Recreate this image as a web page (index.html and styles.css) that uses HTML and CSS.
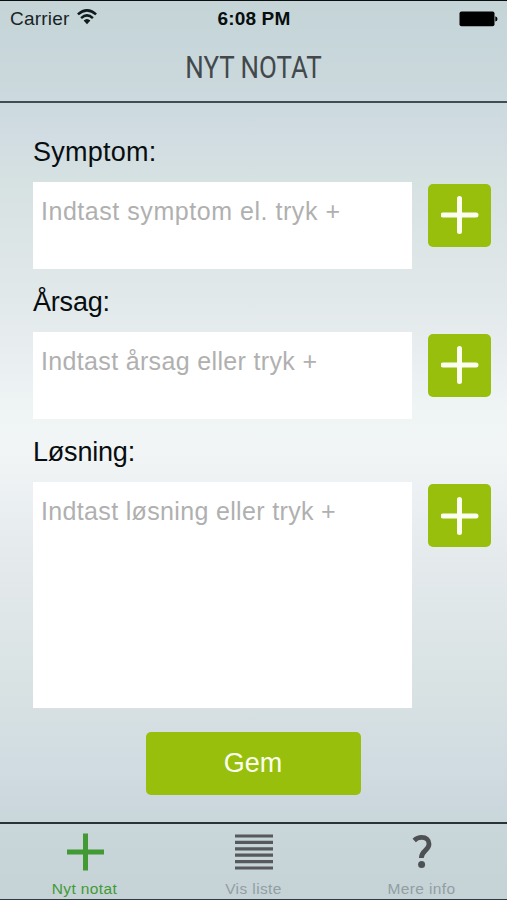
FILE: index.html
```
<!DOCTYPE html>
<html lang="da">
<head>
<meta charset="utf-8">
<title>Nyt notat</title>
<link rel="stylesheet" href="styles.css">
</head>
<body>
<div class="app">
  <header class="header">
    <div class="status">
      <div class="carrier"><span>Carrier</span>
        <svg class="wifi" width="20" height="16" viewBox="0 0 20 16"><g fill="none" stroke="#111a1c" stroke-width="2.5"><path d="M.9 5.4Q10-2.6 19.1 5.4"/><path d="M4.1 9.1Q10 3.7 15.9 9.1"/></g><path d="M6.6 11.6Q10 8.4 13.4 11.6L10 15.2Z" fill="#111a1c"/></svg>
      </div>
      <div class="time">6:08 PM</div>
      <svg class="battery" width="39" height="16" viewBox="0 0 39 16"><rect x=".5" y=".5" width="35" height="14.8" rx="2" fill="#000"/><path d="M36.3 5.2Q38.5 6 38.5 8T36.3 10.6Z" fill="#000"/></svg>
    </div>
    <h1 class="title">NYT NOTAT</h1>
  </header>
  <main class="form">
    <section class="field">
      <label class="label symptom" for="symptom">Symptom:</label>
      <div class="row"><textarea id="symptom" class="input wide" placeholder="Indtast symptom el. tryk +"></textarea>
      <button class="add" aria-label="Tilføj symptom"><svg width="38" height="38" viewBox="0 0 38 38"><path d="M18.5 2.5V35.5M2 19H35"/></svg></button></div>
    </section>
    <section class="field">
      <label class="label cause" for="cause">Årsag:</label>
      <div class="row"><textarea id="cause" class="input" placeholder="Indtast årsag eller tryk +"></textarea>
      <button class="add" aria-label="Tilføj årsag"><svg width="38" height="38" viewBox="0 0 38 38"><path d="M18.5 2.5V35.5M2 19H35"/></svg></button></div>
    </section>
    <section class="field">
      <label class="label solution" for="solution">Løsning:</label>
      <div class="row"><textarea id="solution" class="input tall" placeholder="Indtast løsning eller tryk +"></textarea>
      <button class="add" aria-label="Tilføj løsning"><svg width="38" height="38" viewBox="0 0 38 38"><path d="M18.5 2.5V35.5M2 19H35"/></svg></button></div>
    </section>
    <button class="save">Gem</button>
  </main>
  <nav class="tabs">
    <div class="tab active">
      <svg width="40" height="40" viewBox="0 0 40 40"><path d="M20.5 1.5V38.5M2 20H39" stroke="#429a35" stroke-width="5"/></svg>
      <span>Nyt notat</span>
    </div>
    <div class="tab">
      <svg width="40" height="40" viewBox="0 0 40 40"><path d="M1 4H39M1 10.4H39M1 16.8H39M1 23.2H39M1 29.6H39M1 36H39" stroke="#56595d" stroke-width="3.2"/></svg>
      <span>Vis liste</span>
    </div>
    <div class="tab">
      <svg width="40" height="40" viewBox="0 0 40 40"><path d="M11.2 8.5Q14.4 5.4 18.5 5.4C23.5 5.4 26 8 26 12C26 18.5 18.5 18.3 18.3 26" fill="none" stroke="#4d5154" stroke-width="4.8"/><circle cx="18.6" cy="32.6" r="3.5" fill="#4d5154"/></svg>
      <span>Mere info</span>
    </div>
  </nav>
</div>
</body>
</html>
```
FILE: styles.css
```
* { box-sizing: border-box; }
body { margin: 0; font-family: "Liberation Sans", Arial, sans-serif; }
.app {
  width: 507px;
  height: 900px;
  display: flex;
  flex-direction: column;
  overflow: hidden;
  border-top: 1px solid #090d10;
  border-bottom: 1px solid #303a40;
  background: linear-gradient(#c4d4d7 0, #cddadf 110px, #d0dce2 130px, #d6e1e2 180px, #e1e8ea 290px, #eff4f5 410px, #f1f5f6 450px, #e5eaed 550px, #d8e2e3 690px, #d0dbe2 770px, #c9d6da 820px, #c5d3d7 900px);
}
.header {
  height: 102px;
  flex: none;
  border-bottom: 2px solid #414d54;
}
.status {
  height: 35px;
  display: grid;
  grid-template-columns: 1fr auto 1fr;
  align-items: center;
  padding: 0 9px 0 10px;
  font-size: 19px;
  color: #1a2426;
}
.carrier { display: flex; align-items: center; gap: 8px; letter-spacing: .2px; }
.wifi { margin-top: -3px; }
.time { font-weight: bold; letter-spacing: .15px; color: #080d0e; }
.battery { justify-self: end; }
.title {
  margin: 13px 0 0;
  text-align: center;
  font: 400 31px/38px Roboto, sans-serif;
  color: #42484b;
  transform: scaleX(.835);
}
.form {
  flex: 1;
  padding: 28.5px 16px 0 33px;
}
.label {
  display: block;
  height: 50px;
  font-size: 27px;
  line-height: 40px;
  color: #080d0f;
}
.symptom { letter-spacing: .25px; }
.cause { letter-spacing: -.2px; }
.solution { letter-spacing: -.2px; }
.row { display: flex; justify-content: space-between; align-items: flex-start; }
.input {
  display: block;
  width: 379px;
  height: 87px;
  margin: 0 0 13.4px;
  padding: 14px 8px;
  border: 0;
  resize: none;
  overflow: hidden;
  outline: 0;
  background: #fff;
  font: 25px/30px "Liberation Sans", Arial, sans-serif;
  letter-spacing: .34px;
}
.wide { letter-spacing: .54px; }
.input::placeholder { color: #b0b0b0; opacity: 1; }
.tall { height: 226px; margin-bottom: 24px; }
.add {
  width: 63px;
  height: 63px;
  margin-top: 2px;
  padding: 0;
  display: grid;
  place-items: center;
  border: 0;
  border-radius: 5px;
  background: #98bf0c;
}
.add path { stroke: #fcfff0; stroke-width: 5; stroke-linecap: round; }
.save {
  display: block;
  width: 215px;
  height: 63px;
  margin-left: 113.4px;
  padding: 0 2px 0 0;
  border: 0;
  border-radius: 5px;
  background: #98bf0c;
  color: #fbfff0;
  font: 27px/63px "Liberation Sans", Arial, sans-serif;
}
.tabs {
  flex: none;
  height: 77px;
  border-top: 2px solid #283238;
  display: grid;
  grid-template-columns: repeat(3, 1fr);
}
.tab {
  display: flex;
  flex-direction: column;
  align-items: center;
  padding-top: 8px;
  font-size: 15.5px;
  line-height: 18px;
  letter-spacing: .4px;
  color: #929ea2;
}
.tab span { margin-top: 8px; }
.tab:last-child span { margin-right: 2px; }
.active { color: #429a35; }
```
